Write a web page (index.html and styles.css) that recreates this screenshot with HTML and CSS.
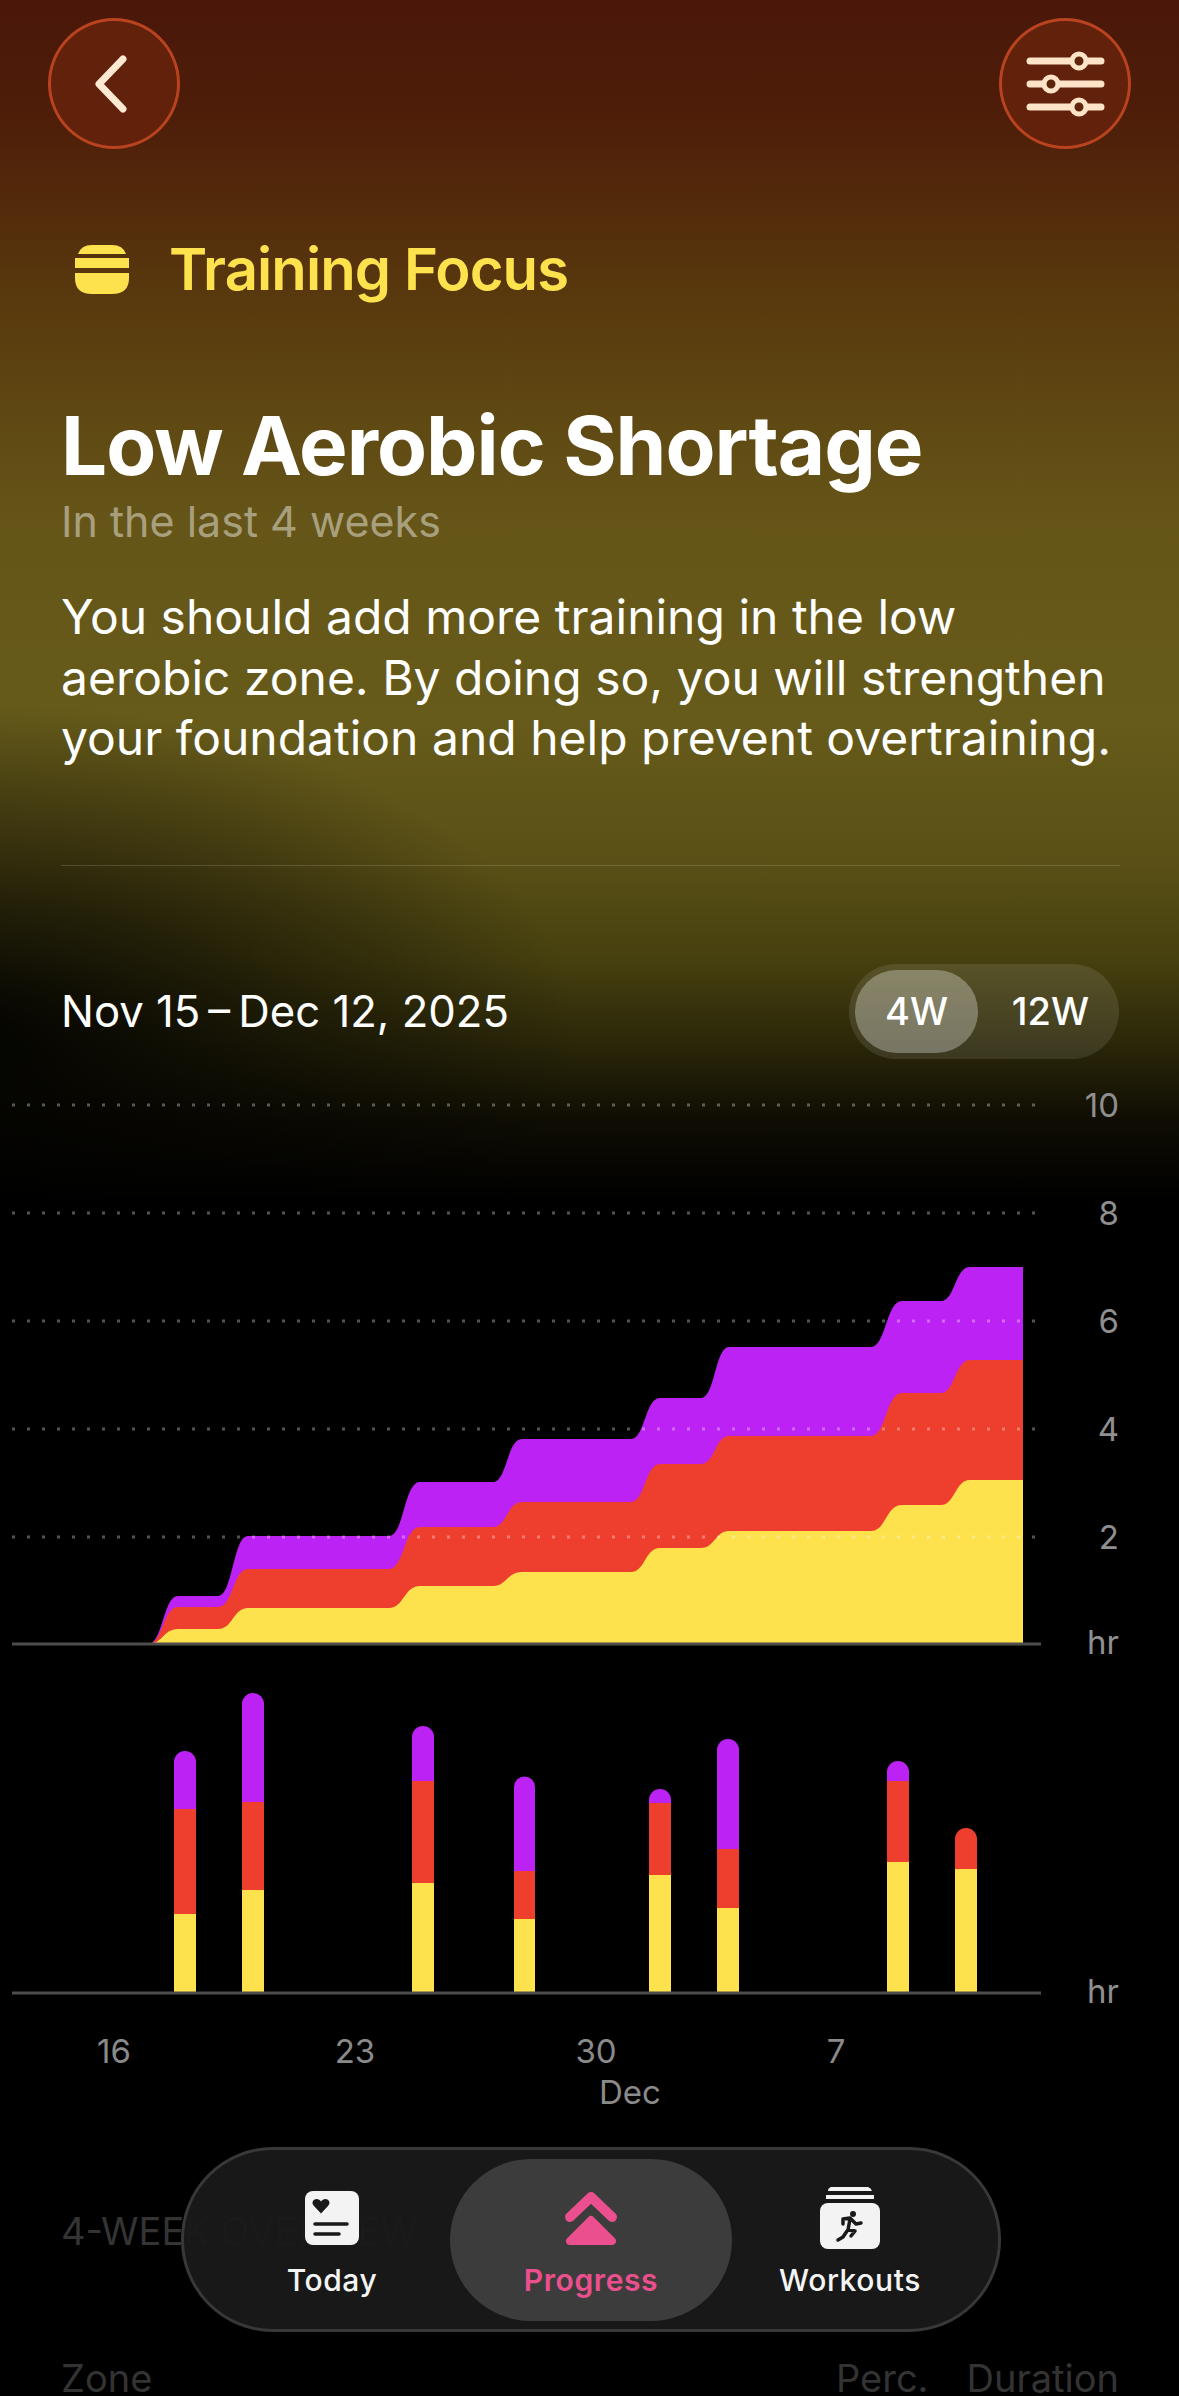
FILE: index.html
```html
<!DOCTYPE html>
<html lang="en">
<head>
    <meta charset="UTF-8">
    <meta name="viewport" content="width=device-width, initial-scale=1.0">
    <title>Training Focus</title>
    <link rel="stylesheet" href="styles.css">
</head>
<body>
    <div class="page">
        <div class="topbar">
            <button class="round-btn">
                <svg width="40" height="62" viewBox="0 0 40 62"><path d="M29 6 L5 31 L29 56" class="back-stroke"/></svg>
            </button>
            <button class="round-btn">
                <svg width="80" height="68" viewBox="0 0 80 68">
                    <path d="M5 11H76M5 34H76M5 57H76" class="filter-line"/>
                    <circle cx="54" cy="11" r="7" class="filter-knob"/>
                    <circle cx="26" cy="34" r="7" class="filter-knob"/>
                    <circle cx="54" cy="57" r="7" class="filter-knob"/>
                </svg>
            </button>
        </div>

        <div class="focus-label">
            <svg width="54" height="49" viewBox="0 0 54 49">
                <path d="M3 9 Q6 0 17 0 H37 Q48 0 51 9 Z" class="focus-icon"/>
                <rect x="0" y="13" width="54" height="10" class="focus-icon"/>
                <path d="M0 28 H54 V33 Q54 49 37 49 H17 Q0 49 0 33 Z" class="focus-icon"/>
            </svg>
            <span>Training Focus</span>
        </div>

        <div class="summary">
            <h1>Low Aerobic Shortage</h1>
            <div class="sub">In the last 4 weeks</div>
            <p>You should add more training in the low<br>aerobic zone. By doing so, you will strengthen<br>your foundation and help prevent overtraining.</p>
        </div>

        <div class="divider"></div>

        <div class="range-row">
            <div class="range-date">Nov 15&#8201;–&#8201;Dec 12, 2025</div>
            <div class="segment">
                <div class="seg-item seg-active">4W</div>
                <div class="seg-item">12W</div>
            </div>
        </div>

        <svg class="charts" width="1179" height="1050" viewBox="0 1080 1179 1050">
            <path class="zone-purple" d="M148 1644 C163 1644 163 1596 178 1596 H218 C233 1596 233 1536 248 1536 H389 C404 1536 404 1482 420 1482 H493 C507 1482 507 1439 522 1439 H631 C645 1439 645 1398 660 1398 H701 C715 1398 715 1347 729 1347 H871 C886 1347 886 1301 902 1301 H941 C955 1301 955 1267 970 1267 H1023 V1644 Z"/>
            <path class="zone-red" d="M148 1644 C163 1644 163 1607 178 1607 H218 C233 1607 233 1569 248 1569 H389 C404 1569 404 1527 420 1527 H493 C507 1527 507 1502 522 1502 H631 C645 1502 645 1464 660 1464 H701 C715 1464 715 1436 729 1436 H871 C886 1436 886 1393 902 1393 H941 C955 1393 955 1360 970 1360 H1023 V1644 Z"/>
            <path class="zone-yellow" d="M148 1644 C163 1644 163 1629 178 1629 H218 C233 1629 233 1608 248 1608 H389 C404 1608 404 1586 420 1586 H493 C507 1586 507 1572 522 1572 H631 C645 1572 645 1548 660 1548 H701 C715 1548 715 1531 729 1531 H871 C886 1531 886 1505 902 1505 H941 C955 1505 955 1480 970 1480 H1023 V1644 Z"/>

            <line class="grid" x1="12" y1="1105" x2="1037" y2="1105"/>
            <line class="grid" x1="12" y1="1213" x2="1037" y2="1213"/>
            <line class="grid" x1="12" y1="1321" x2="1037" y2="1321"/>
            <line class="grid" x1="12" y1="1429" x2="1037" y2="1429"/>
            <line class="grid" x1="12" y1="1537" x2="1037" y2="1537"/>
            <line class="axis" x1="12" y1="1644" x2="1041" y2="1644"/>

            <text class="tick" x="1119" y="1117">10</text>
            <text class="tick" x="1119" y="1225">8</text>
            <text class="tick" x="1119" y="1333">6</text>
            <text class="tick" x="1119" y="1441">4</text>
            <text class="tick" x="1119" y="1549">2</text>
            <text class="tick" x="1119" y="1654">hr</text>

            <!-- daily bars -->
            <path class="zone-purple" d="M174 1809 V1762 A11 11 0 0 1 196 1762 V1809 Z"/>
            <rect class="zone-red" x="174" y="1809" width="22" height="105"/>
            <rect class="zone-yellow" x="174" y="1914" width="22" height="78"/>

            <path class="zone-purple" d="M242 1802 V1704 A11 11 0 0 1 264 1704 V1802 Z"/>
            <rect class="zone-red" x="242" y="1802" width="22" height="88"/>
            <rect class="zone-yellow" x="242" y="1890" width="22" height="102"/>

            <path class="zone-purple" d="M412 1781 V1737 A11 11 0 0 1 434 1737 V1781 Z"/>
            <rect class="zone-red" x="412" y="1781" width="22" height="102"/>
            <rect class="zone-yellow" x="412" y="1883" width="22" height="109"/>

            <path class="zone-purple" d="M514 1871 V1787 A10.5 10.5 0 0 1 535 1787 V1871 Z"/>
            <rect class="zone-red" x="514" y="1871" width="21" height="48"/>
            <rect class="zone-yellow" x="514" y="1919" width="21" height="73"/>

            <path class="zone-purple" d="M649 1803 V1800 A11 11 0 0 1 671 1800 V1803 Z"/>
            <rect class="zone-red" x="649" y="1803" width="22" height="72"/>
            <rect class="zone-yellow" x="649" y="1875" width="22" height="117"/>

            <path class="zone-purple" d="M717 1849 V1750 A11 11 0 0 1 739 1750 V1849 Z"/>
            <rect class="zone-red" x="717" y="1849" width="22" height="59"/>
            <rect class="zone-yellow" x="717" y="1908" width="22" height="84"/>

            <path class="zone-purple" d="M887 1781 V1772 A11 11 0 0 1 909 1772 V1781 Z"/>
            <rect class="zone-red" x="887" y="1781" width="22" height="81"/>
            <rect class="zone-yellow" x="887" y="1862" width="22" height="130"/>

            <path class="zone-red" d="M955 1869 V1839 A11 11 0 0 1 977 1839 V1869 Z"/>
            <rect class="zone-yellow" x="955" y="1869" width="22" height="123"/>

            <line class="axis" x1="12" y1="1993" x2="1041" y2="1993"/>
            <text class="tick" x="1119" y="2003">hr</text>

            <text class="day" x="114" y="2063">16</text>
            <text class="day" x="355" y="2063">23</text>
            <text class="day" x="596" y="2063">30</text>
            <text class="day" x="836" y="2063">7</text>
            <text class="day" x="630" y="2104">Dec</text>
        </svg>

        <div class="overview-title">4-WEEK OVERVIEW</div>
        <div class="overview-head">
            <span>Zone</span>
            <span class="head-right"><span>Perc.</span><span>Duration</span></span>
        </div>

        <div class="tabbar">
            <div class="tab tab-left">
                <div class="tab-icon">
                    <svg width="54" height="54" viewBox="0 0 54 54">
                        <rect width="54" height="54" rx="8" class="tab-fill"/>
                        <path d="M16 22.500 L9 15 C6 12 8 8 11.500 8 C13.500 8 15 9 16 10.500 C17 9 18.500 8 20.500 8 C24 8 26 12 23 15 Z" class="tab-dark"/>
                        <path d="M10 33H42M10 43H34" class="tab-lines"/>
                    </svg>
                </div>
                <span>Today</span>
            </div>
            <div class="tab tab-active">
                <div class="tab-icon">
                    <svg width="54" height="54" viewBox="0 0 54 54">
                        <path d="M6 26 L27 6 L48 26" class="tab-chevron"/>
                        <path d="M27 29 L48 50 H6 Z" class="tab-pink"/>
                    </svg>
                </div>
                <span>Progress</span>
            </div>
            <div class="tab tab-right">
                <div class="tab-icon">
                    <svg width="60" height="62" viewBox="0 0 60 62">
                        <path d="M11 0 H48 Q51 1 52 4 H8 Q8 1 11 0 Z" class="tab-fill"/>
                        <rect x="6" y="8" width="48" height="4" class="tab-fill"/>
                        <rect y="16" width="60" height="46" rx="8" class="tab-fill"/>
                        <circle cx="33" cy="27" r="3" class="tab-dark"/>
                        <path d="M23 32 L30 31 L36 37 L41 36 M30 32 L28 43 L35 44 L31 49 M27 44 L23 50 L18 53 M23 32 L23 37" class="tab-run"/>
                    </svg>
                </div>
                <span>Workouts</span>
            </div>
        </div>
    </div>
</body>
</html>
```

FILE: styles.css
```css
html, body {
    margin: 0;
    padding: 0;
    background-color: #000;
}
.page {
    position: relative;
    width: 1179px;
    height: 2396px;
    overflow: hidden;
    font-family: Inter, "Noto Sans", sans-serif;
    color: #fff;
    background-color: #000;
    background-image:
        radial-gradient(ellipse 620px 340px at -40px 1040px, rgba(0, 0, 0, 0.95), rgba(0, 0, 0, 0)),
        linear-gradient(180deg, #4a1709 0, #4e1e09 120px, #5a3c0e 320px, #655518 520px, #665b1a 720px, #5a5016 860px, #46400f 960px, #2c2809 1040px, #0f0d03 1120px, #000 1200px);
    background-repeat: no-repeat;
}
.topbar {
    display: flex;
    justify-content: space-between;
    padding: 18px 48px 0 48px;
}
.round-btn {
    display: flex;
    align-items: center;
    justify-content: center;
    width: 132px;
    height: 131px;
    padding: 0;
    border: 3px solid #b9431f;
    border-radius: 50%;
    background-color: #62210b;
    box-sizing: border-box;
}
.back-stroke {
    fill: none;
    stroke: #fde8d2;
    stroke-width: 7;
    stroke-linecap: round;
    stroke-linejoin: round;
}
.filter-line {
    fill: none;
    stroke: #fde3c8;
    stroke-width: 7;
    stroke-linecap: round;
}
.filter-knob {
    fill: #5f250b;
    stroke: #fde3c8;
    stroke-width: 5;
}
.focus-label {
    display: flex;
    align-items: center;
    gap: 40px;
    margin: 82px 0 0 75px;
    color: #fde24e;
    font-size: 58px;
    font-weight: 600;
    letter-spacing: -0.9px;
    line-height: 76px;
}
.focus-icon {
    fill: #fde24e;
}
.summary {
    margin: 90px 40px 0 61px;
}
.summary h1 {
    margin: 0;
    font-size: 81.7px;
    font-weight: 700;
    letter-spacing: -1px;
    line-height: 98px;
}
.sub {
    margin-top: 0;
    color: rgba(255, 255, 255, 0.45);
    font-size: 43px;
    line-height: 52px;
}
.summary p {
    margin: 40px 0 0 0;
    font-size: 48px;
    line-height: 60.5px;
    white-space: nowrap;
}
.divider {
    height: 1px;
    margin: 96px 59px 0 61px;
    background-color: rgba(255, 255, 255, 0.15);
}
.range-row {
    display: flex;
    align-items: center;
    justify-content: space-between;
    margin: 98px 60px 0 61px;
}
.range-date {
    font-size: 43.7px;
}
.segment {
    display: flex;
    align-items: center;
    width: 270px;
    height: 95px;
    padding: 0 6px;
    box-sizing: border-box;
    border-radius: 48px;
    background-color: rgba(255, 255, 255, 0.1);
}
.seg-item {
    display: flex;
    align-items: center;
    justify-content: center;
    height: 83px;
    flex: 1;
    padding-left: 10px;
    font-size: 38px;
    font-weight: 500;
    border-radius: 42px;
}
.seg-active {
    flex: 0 0 123px;
    padding-left: 0;
    background-color: rgba(255, 255, 255, 0.3);
}
.charts {
    display: block;
    margin-top: 21px;
}
.zone-purple {
    fill: #bd22f5;
}
.zone-red {
    fill: #ee3e2d;
}
.zone-yellow {
    fill: #fde24e;
}
.grid {
    stroke: rgba(255, 255, 255, 0.32);
    stroke-width: 3;
    stroke-dasharray: 3 12;
}
.axis {
    stroke: #4d4d4d;
    stroke-width: 3;
}
.tick {
    fill: #8f8f8f;
    font-size: 33px;
    text-anchor: end;
}
.day {
    fill: #8a8a8a;
    font-size: 33px;
    text-anchor: middle;
}
.overview-title {
    margin: 79px 0 0 61px;
    color: #343434;
    font-size: 38px;
    line-height: 44px;
}
.overview-head {
    display: flex;
    justify-content: space-between;
    margin: 107px 60px 0 61px;
    color: #333;
    font-size: 38px;
    line-height: 36px;
}
.head-right {
    display: flex;
    gap: 38px;
}
.tabbar {
    position: absolute;
    left: 181px;
    top: 2147px;
    width: 820px;
    height: 185px;
    box-sizing: border-box;
    padding-top: 9px;
    display: flex;
    justify-content: center;
    border: 3px solid #383838;
    border-radius: 92px;
    background-color: rgba(25, 25, 25, 0.96);
}
.tab {
    display: flex;
    flex-direction: column;
    align-items: center;
    flex: none;
    box-sizing: border-box;
    width: 282px;
    height: 162px;
    padding-top: 28px;
    font-size: 30px;
    font-weight: 500;
    letter-spacing: 0.6px;
    line-height: 36px;
    color: #f4f4f4;
}
.tab-left {
    width: 266px;
    padding-left: 30px;
}
.tab-right {
    width: 266px;
    padding-right: 30px;
}
.tab-icon {
    display: flex;
    align-items: center;
    justify-content: center;
    height: 62px;
    margin-bottom: 13px;
}
.tab-active {
    border-radius: 81px;
    background-color: #3c3c3c;
    color: #ec4f8e;
    font-weight: 600;
}
.tab-fill {
    fill: #f3f3f3;
}
.tab-dark {
    fill: #191919;
}
.tab-lines {
    fill: none;
    stroke: #191919;
    stroke-width: 3.500;
    stroke-linecap: round;
}
.tab-chevron {
    fill: none;
    stroke: #ec4f8e;
    stroke-width: 10;
    stroke-linecap: round;
    stroke-linejoin: round;
}
.tab-pink {
    fill: #ec4f8e;
    stroke: #ec4f8e;
    stroke-width: 8;
    stroke-linejoin: round;
}
.tab-run {
    fill: none;
    stroke: #191919;
    stroke-width: 3.500;
    stroke-linecap: round;
    stroke-linejoin: round;
}
```
